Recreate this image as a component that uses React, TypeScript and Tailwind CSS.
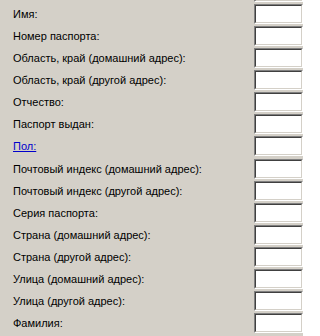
import React from "react";

const labels = [
  "Имя:",
  "Номер паспорта:",
  "Область, край (домашний адрес):",
  "Область, край (другой адрес):",
  "Отчество:",
  "Паспорт выдан:",
  "Пол:",
  "Почтовый индекс (домашний адрес):",
  "Почтовый индекс (другой адрес):",
  "Серия паспорта:",
  "Страна (домашний адрес):",
  "Страна (другой адрес):",
  "Улица (домашний адрес):",
  "Улица (другой адрес):",
  "Фамилия:",
];

function Field() {
  return (
    <div className="w-[60px] h-[20px] border border-t-[#808080] border-l-[#808080] border-b-[#ffffff] border-r-[#ffffff]">
      <div className="h-full w-full bg-white border border-t-[#404040] border-l-[#404040] border-b-[#d4d0c8] border-r-[#d4d0c8]" />
    </div>
  );
}

function Row({ label, extra }: { label?: string; extra?: boolean }) {
  return (
    <div className={`flex h-[22px] ${extra ? "mt-px" : ""}`}>
      <div className="flex-1 pl-[13px] h-[20px] flex items-center text-[11px] leading-none text-black">
        {label === "Пол:" ? (
          <span className="text-[#0000cc] underline">{label}</span>
        ) : (
          label
        )}
      </div>
      <div className="w-[49px] flex items-start h-[22px]">
        <Field />
      </div>
    </div>
  );
}

export default function App() {
  return (
    <div
      className="w-[303px] h-[336px] overflow-hidden bg-[#d4d0c8]"
      style={{ fontFamily: "Tahoma, 'Liberation Sans', Arial, sans-serif" }}
    >
      <div className="-mt-[18px]">
        <Row />
        {labels.map((l, i) => (
          <Row key={i} label={l} extra={i === 7} />
        ))}
      </div>
    </div>
  );
}
